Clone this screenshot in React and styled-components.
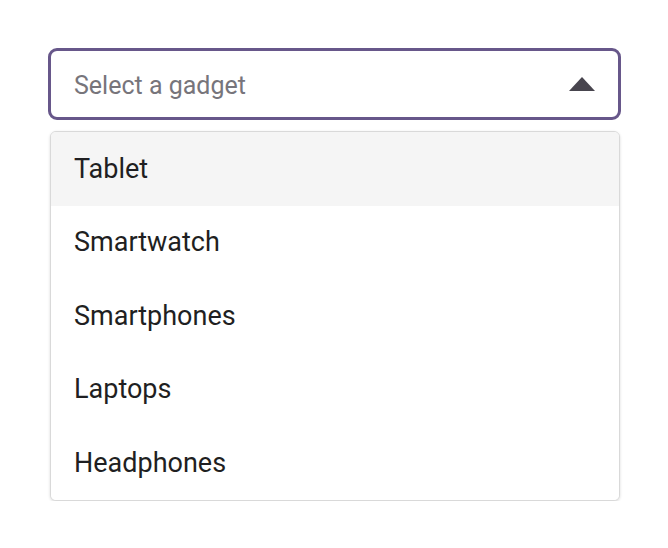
import React, { useState } from "react";
import styled, { createGlobalStyle } from "styled-components";

const GlobalStyle = createGlobalStyle`
  body {
    margin: 0;
    background: #fff;
    font-family: Roboto, "Noto Sans", sans-serif;
  }
`;

const gadgets = ["Tablet", "Smartwatch", "Smartphones", "Laptops", "Headphones"];

const App = () => {
  const [hovered] = useState(0);
  return (
    <>
      <GlobalStyle />
      <Page>
        <Select>
          <Trigger>
            <Placeholder>Select a gadget</Placeholder>
            <Caret viewBox="0 0 26 14">
              <path d="M13 0 L26 14 L0 14 Z" fill="#48454e" />
            </Caret>
          </Trigger>
          <Menu>
            {gadgets.map((g, i) => (
              <Option key={g} $active={i === hovered}>
                {g}
              </Option>
            ))}
          </Menu>
        </Select>
      </Page>
    </>
  );
};

const Page = styled.div`
  padding: 48px 0 0 48px;
`;

const Select = styled.div`
  width: 573px;
  display: flex;
  flex-direction: column;
  gap: 11px;
`;

const Trigger = styled.button`
  box-sizing: border-box;
  height: 72px;
  width: 100%;
  display: flex;
  align-items: center;
  justify-content: space-between;
  padding: 2px 23px 0 23px;
  background: #fff;
  border: 3px solid #67578a;
  border-radius: 9px;
  cursor: pointer;
`;

const Placeholder = styled.span`
  font-family: Roboto, sans-serif;
  font-size: 25px;
  color: #77757b;
`;

const Caret = styled.svg`
  width: 26px;
  height: 14px;
  margin-bottom: 2px;
`;

const Menu = styled.ul`
  box-sizing: border-box;
  list-style: none;
  margin: 0 1px 0 2px;
  padding: 0;
  border: 1px solid #d9d9d9;
  border-radius: 6px;
  box-shadow: 0 1px 3px rgba(0, 0, 0, 0.15);
  overflow: hidden;
  background: #fff;
`;

const Option = styled.li`
  height: 73.5px;
  display: flex;
  align-items: center;
  padding-left: 23px;
  font-family: Roboto, sans-serif;
  font-size: 27px;
  color: #1f1f22;
  background: ${(p) => (p.$active ? "#f5f5f5" : "#fff")};
`;

export default App;
